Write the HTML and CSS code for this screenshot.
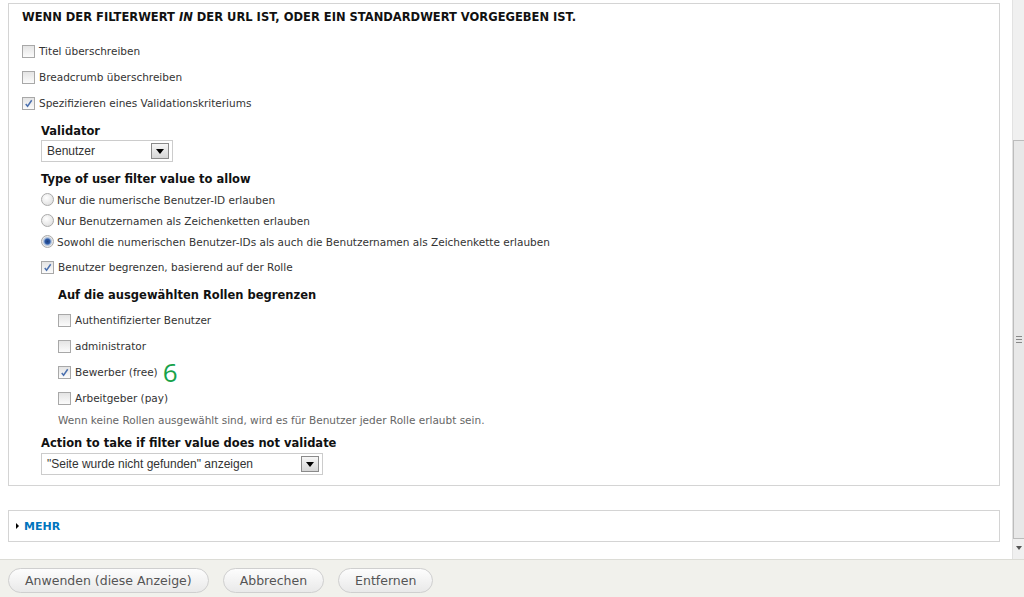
FILE: index.html
```html
<!DOCTYPE html>
<html lang="de">
<head>
    <meta charset="UTF-8">
    <title>Argument konfigurieren</title>
    <link rel="stylesheet" href="styles.css">
</head>
<body>

    <div class="dialog">
        <div class="scroll-content">

            <div class="fieldset">
                <h2 class="legend">Wenn der Filterwert <em>in</em> der URL ist, oder ein Standardwert vorgegeben ist.</h2>

                <div class="check-row"><span class="cb"></span>Titel überschreiben</div>
                <div class="check-row"><span class="cb"></span>Breadcrumb überschreiben</div>
                <div class="check-row"><span class="cb checked"><svg viewBox="0 0 12 12"><path d="M3 6.5 L5 9 L9.5 2.5" /></svg></span>Spezifizieren eines Validationskriteriums</div>

                <div class="indent">
                    <label class="field-label first">Validator</label>
                    <div class="select small">
                        <span>Benutzer</span>
                        <span class="select-btn"><i></i></span>
                    </div>

                    <label class="field-label">Type of user filter value to allow</label>
                    <div class="radios">
                        <div class="radio-row"><span class="rd"></span>Nur die numerische Benutzer-ID erlauben</div>
                        <div class="radio-row"><span class="rd"></span>Nur Benutzernamen als Zeichenketten erlauben</div>
                        <div class="radio-row"><span class="rd selected"></span>Sowohl die numerischen Benutzer-IDs als auch die Benutzernamen als Zeichenkette erlauben</div>
                    </div>

                    <div class="check-row"><span class="cb checked"><svg viewBox="0 0 12 12"><path d="M3 6.5 L5 9 L9.5 2.5" /></svg></span>Benutzer begrenzen, basierend auf der Rolle</div>

                    <div class="indent roles">
                        <label class="field-label">Auf die ausgewählten Rollen begrenzen</label>
                        <div class="role-list">
                            <div class="check-row"><span class="cb"></span>Authentifizierter Benutzer</div>
                            <div class="check-row"><span class="cb"></span>administrator</div>
                            <div class="check-row"><span class="cb checked"><svg viewBox="0 0 12 12"><path d="M3 6.5 L5 9 L9.5 2.5" /></svg></span>Bewerber (free)<span class="marker">6</span></div>
                            <div class="check-row"><span class="cb"></span>Arbeitgeber (pay)</div>
                        </div>
                        <div class="description">Wenn keine Rollen ausgewählt sind, wird es für Benutzer jeder Rolle erlaubt sein.</div>
                    </div>

                    <label class="field-label action">Action to take if filter value does not validate</label>
                    <div class="select wide">
                        <span>"Seite wurde nicht gefunden" anzeigen</span>
                        <span class="select-btn"><i></i></span>
                    </div>
                </div>
            </div>

            <!-- Mehr -->
            <div class="collapsed">
                <span class="arrow"></span><a href="#">Mehr</a>
            </div>

        </div>

        <!-- fake scrollbar of the dialog -->
        <div class="scrollbar">
            <div class="track"></div>
            <div class="thumb"><span class="grip"></span></div>
            <div class="down"><i></i></div>
        </div>
    </div>

    <div class="buttons">
        <button class="btn">Anwenden (diese Anzeige)</button>
        <button class="btn">Abbrechen</button>
        <button class="btn">Entfernen</button>
    </div>

</body>
</html>
```

FILE: styles.css
```css
body {
    margin: 0;
    padding: 0;
    background: #fff;
    font-family: "DejaVu Sans", Verdana, sans-serif;
    font-size: 10.5px;
    color: #333;
}
.dialog {
    display: flex;
    height: 559px;
    overflow: hidden;
}
.scroll-content {
    flex: 1;
    padding: 3px 12px 0 8px;
}

/* Fieldset */
.fieldset {
    border: 1px solid #d4d4d4;
    padding: 6px 13px 10px 13px;
}
.legend {
    margin: 0 0 14px 0;
    font-size: 11.5px;
    line-height: 14px;
    font-weight: bold;
    text-transform: uppercase;
    color: #111;
}
.legend em {
    font-style: italic;
}
.check-row {
    display: flex;
    align-items: center;
    height: 26px;
    white-space: nowrap;
}
.radio-row {
    display: flex;
    align-items: center;
    height: 21px;
    white-space: nowrap;
}
.cb {
    width: 11px;
    height: 11px;
    border: 1px solid #a8a8a8;
    background: linear-gradient(#e4e4e4, #fbfbfb);
    margin-right: 4px;
    position: relative;
    flex-shrink: 0;
}
.cb svg {
    position: absolute;
    left: 0;
    top: 0;
    width: 11px;
    height: 11px;
}
.cb svg path {
    fill: none;
    stroke: #4a6fae;
    stroke-width: 1.6;
}
.rd {
    width: 11px;
    height: 11px;
    border: 1px solid #aaa;
    border-radius: 50%;
    background: radial-gradient(circle at 40% 35%, #fff, #d8d8d8);
    margin-right: 3px;
    flex-shrink: 0;
    position: relative;
}
.rd.selected {
    background: radial-gradient(circle at 50% 50%, #1d3e7a 0, #2c5aa8 2.5px, #9bb4d8 3.5px, #e8e8e8 5px);
}

.indent {
    padding-left: 19px;
}
.field-label {
    display: block;
    font-size: 11.5px;
    line-height: 14px;
    font-weight: bold;
    color: #111;
    margin-top: 10px;
}
.field-label.first {
    margin-top: 8px;
}
.select {
    display: flex;
    align-items: center;
    justify-content: space-between;
    height: 20px;
    border: 1px solid #ccc;
    background: #fff;
    margin-top: 2px;
    padding-left: 5px;
    padding-right: 3px;
    font-family: "Liberation Sans", Arial, sans-serif;
    font-size: 12px;
    color: #333;
}
.select.small {
    width: 122px;
}
.select.wide {
    width: 272px;
    margin-top: 3px;
}
.select-btn {
    width: 16px;
    height: 14px;
    border: 1px solid #8a8a8a;
    background: linear-gradient(#f6f6f6, #d6d6d6);
    display: flex;
    align-items: center;
    justify-content: center;
}
.select-btn i {
    width: 0;
    height: 0;
    border-left: 4px solid transparent;
    border-right: 4px solid transparent;
    border-top: 5px solid #000;
}
.radios {
    margin-top: 3px;
    margin-bottom: 2px;
}

.roles {
    padding-left: 17px;
}
.roles .field-label {
    margin-top: 8px;
}
.role-list {
    margin-top: 5px;
}
.marker {
    font-family: "Open Sans", sans-serif;
    font-size: 26px;
    line-height: 20px;
    color: #17a24a;
    margin-left: 5px;
}
.description {
    margin-top: 2px;
    line-height: 14px;
    color: #666;
}
.field-label.action {
    margin-top: 9px;
}

/* Mehr */
.collapsed {
    margin-top: 24px;
    height: 30px;
    border: 1px solid #d4d4d4;
    display: flex;
    align-items: center;
    padding-left: 7px;
}
.collapsed .arrow {
    width: 0;
    height: 0;
    border-top: 3px solid transparent;
    border-bottom: 3px solid transparent;
    border-left: 3px solid #000;
    margin-right: 5px;
}
.collapsed a {
    color: #0074bd;
    font-weight: bold;
    font-size: 11px;
    text-transform: uppercase;
    text-decoration: none;
}

/* Scrollbar */
.scrollbar {
    width: 11px;
    display: flex;
    flex-direction: column;
    background: #f0f0f0;
    border-left: 1px solid #e2e2e2;
    padding-bottom: 3px;
}
.track {
    height: 140px;
}
.thumb {
    flex: 1;
    background: #e8e8e8;
    border: 1px solid #bcbcbc;
    border-right: none;
    display: flex;
    align-items: center;
    justify-content: center;
}
.grip {
    width: 6px;
    height: 5px;
    border-top: 1px solid #888;
    border-bottom: 1px solid #888;
    position: relative;
}
.grip::after {
    content: "";
    position: absolute;
    left: 0;
    right: 0;
    top: 2px;
    border-top: 1px solid #888;
}
.down {
    height: 17px;
    display: flex;
    align-items: center;
    justify-content: center;
}
.down i {
    width: 0;
    height: 0;
    border-left: 3px solid transparent;
    border-right: 3px solid transparent;
    border-top: 4px solid #555;
}

/* Footer buttons */
.buttons {
    border-top: 1px solid #dcdcd6;
    background: #f1f1ec;
    height: 38px;
    padding: 8px 0 0 8px;
    box-sizing: border-box;
    display: flex;
    gap: 14px;
    align-items: flex-start;
}
.btn {
    height: 25px;
    padding: 0 16px;
    border: 1px solid #cfcfcf;
    border-radius: 13px;
    background: linear-gradient(#fdfdfd, #e9e9e9);
    font-family: "DejaVu Sans", Verdana, sans-serif;
    font-size: 12.5px;
    color: #555;
    cursor: pointer;
}
```
